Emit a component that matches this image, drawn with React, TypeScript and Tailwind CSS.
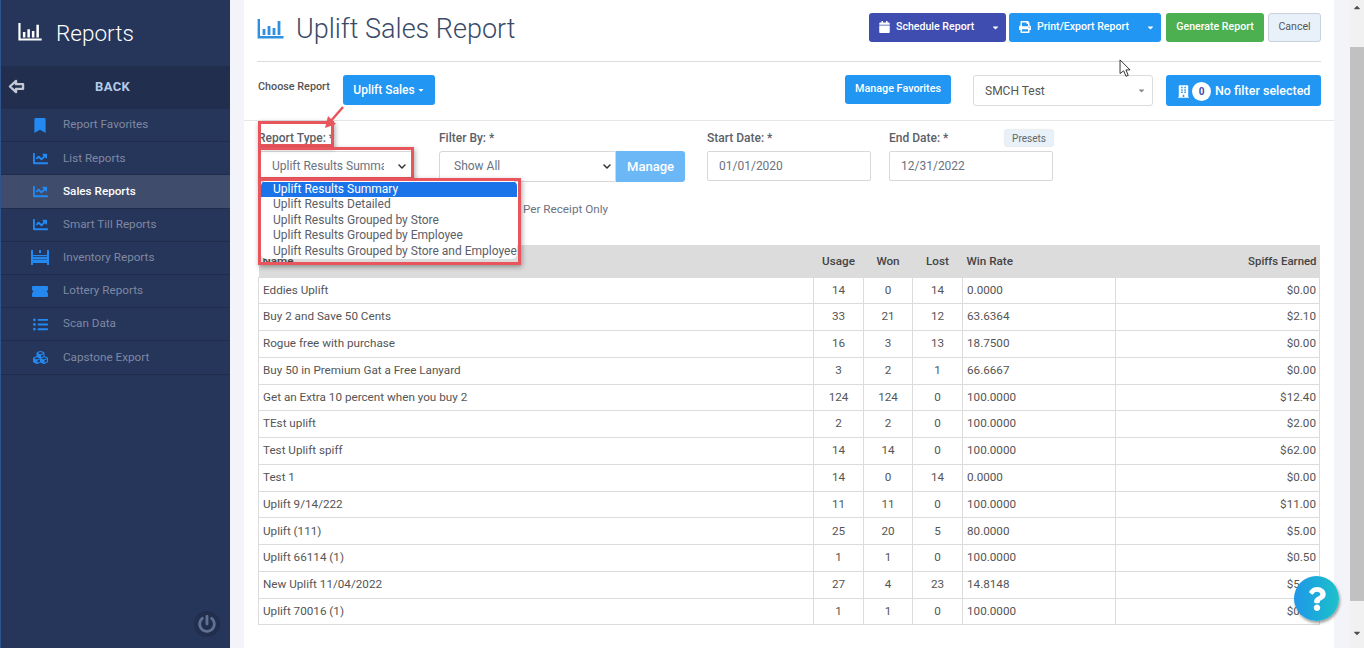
import { FaBookmark, FaChartLine, FaCalendar, FaPrint, FaBuilding, FaListUl, FaCubes, FaPowerOff, FaQuestion, FaCaretDown, FaChevronDown } from "react-icons/fa"

function BarsIcon({ className }: { className: string }) {
  return (
    <svg viewBox="0 0 26 20" fill="none" stroke="currentColor" className={className}>
      <path d="M1.3 0v18.300H26" strokeWidth="2.400" />
      <path d="M6.500 10v6M11.500 7v9M16.500 9v7M21.500 2v14" strokeWidth="2.800" />
    </svg>
  )
}

function InventoryIcon() {
  return (
    <svg viewBox="0 0 18 15" className="h-[15px] w-[18px]" fill="currentColor">
      <path d="M0 0h2v5h14V0h2v15h-2v-2H2v2H0z" />
      <path d="M8 0h2v3H8zM3.500 7h6v2h-6zM10.500 7h4v2h-4zM3.500 10h11v1.500h-11z" fill="currentColor" />
      <path d="M2 6h14v.8H2zM2 9.300h14v.5H2z" fill="#26355a" />
    </svg>
  )
}

function TicketIcon() {
  return (
    <svg viewBox="0 0 16 11" className="h-[11px] w-[16px]" fill="currentColor">
      <path d="M1 0h14a1 1 0 0 1 1 1v3.300a1.200 1.200 0 0 0 0 2.400V10a1 1 0 0 1-1 1H1a1 1 0 0 1-1-1V6.700a1.200 1.200 0 0 0 0-2.400V1a1 1 0 0 1 1-1z" />
    </svg>
  )
}

const navItems = [
  { name: "Report Favorites", icon: <FaBookmark className="h-[15px] w-[12px]" /> },
  { name: "List Reports", icon: <FaChartLine className="h-[15px] w-[15px]" /> },
  { name: "Sales Reports", icon: <FaChartLine className="h-[15px] w-[15px]" />, active: true },
  { name: "Smart Till Reports", icon: <FaChartLine className="h-[15px] w-[15px]" /> },
  { name: "Inventory Reports", icon: <InventoryIcon /> },
  { name: "Lottery Reports", icon: <TicketIcon /> },
  { name: "Scan Data", icon: <FaListUl className="h-[15px] w-[15px]" /> },
  { name: "Capstone Export", icon: <FaCubes className="h-[15px] w-[15px]" /> },
]

const rows = [
  ["Eddies Uplift", "14", "0", "14", "0.0000", "$0.00"],
  ["Buy 2 and Save 50 Cents", "33", "21", "12", "63.6364", "$2.10"],
  ["Rogue free with purchase", "16", "3", "13", "18.7500", "$0.00"],
  ["Buy 50 in Premium Gat a Free Lanyard", "3", "2", "1", "66.6667", "$0.00"],
  ["Get an Extra 10 percent when you buy 2", "124", "124", "0", "100.0000", "$12.40"],
  ["TEst uplift", "2", "2", "0", "100.0000", "$2.00"],
  ["Test Uplift spiff", "14", "14", "0", "100.0000", "$62.00"],
  ["Test 1", "14", "0", "14", "0.0000", "$0.00"],
  ["Uplift 9/14/222", "11", "11", "0", "100.0000", "$11.00"],
  ["Uplift (111)", "25", "20", "5", "80.0000", "$5.00"],
  ["Uplift 66114 (1)", "1", "1", "0", "100.0000", "$0.50"],
  ["New Uplift 11/04/2022", "27", "4", "23", "14.8148", "$5.40"],
  ["Uplift 70016 (1)", "1", "1", "0", "100.0000", "$0.10"],
]

const options = [
  "Uplift Results Summary",
  "Uplift Results Detailed",
  "Uplift Results Grouped by Store",
  "Uplift Results Grouped by Employee",
  "Uplift Results Grouped by Store and Employee",
]

function Sidebar() {
  return (
    <aside className="flex h-full w-[230px] shrink-0 flex-col border-l border-[#2f5590] bg-[#26355a]">
      <div className="flex h-[66px] items-center pl-[17px] text-white">
        <BarsIcon className="mt-[-2px] h-[18px] w-[24px]" />
        <span className="ml-[14px] mt-[2px] text-[22.500px] font-light">Reports</span>
      </div>
      <div className="flex h-[43px] items-center border-y border-[#212e4e] bg-[#212e4e] pb-[2px] pl-[7px]">
        <svg viewBox="0 0 18 16" className="h-[15px] w-[17px] text-[#c3c8d2]" fill="none" stroke="currentColor" strokeWidth="2.500">
          <path d="M8.500 2 2 8l6.500 6v-3.500H16v-5H8.500z" strokeLinejoin="round" />
        </svg>
        <span className="ml-[70px] text-[13px] font-bold tracking-[0.4px] text-[#b4cbe8]">BACK</span>
      </div>
      {navItems.map((item) => (
        <div
          key={item.name}
          className={`flex h-[33.2px] items-center border-b border-[#1f2c4c] ${item.active ? "bg-[#404c6b] font-medium text-white" : "text-[#7f89a1]"}`}
        >
          <span className="flex w-[62px] justify-center pl-[16px] text-[#2389f0]">{item.icon}</span>
          <span className="text-[11.7px]">{item.name}</span>
        </div>
      ))}
      <div className="mt-auto flex justify-end pb-[11px] pr-[10px]">
        <span className="flex h-[26px] w-[26px] items-center justify-center rounded-full bg-[#212e4e] text-[#5f7194]">
          <FaPowerOff className="h-[18px] w-[18px]" />
        </span>
      </div>
    </aside>
  )
}

function Header() {
  return (
    <div className="flex h-[62px] items-start justify-between border-b border-[#dcdcdc] pt-[13px]">
      <div className="flex items-center text-[#3a4a68]">
        <BarsIcon className="mt-[-2px] h-[20px] w-[27px] text-[#2f8fe0]" />
        <h1 className="ml-[12px] mt-[-2px] text-[27px] font-light leading-[36px]">Uplift Sales Report</h1>
      </div>
      <div className="flex text-[10.6px] font-medium text-white">
        <div className="flex h-[29px] w-[137px] items-center rounded-[3px] bg-[#3f4db0] pb-[1px] pl-[10px]">
          <FaCalendar className="h-[12px] w-[11px]" />
          <span className="ml-[6px]">Schedule Report</span>
          <FaCaretDown className="ml-auto mr-[6px] h-[9px] w-[9px]" />
        </div>
        <div className="ml-[3px] flex h-[29px] w-[152px] items-center rounded-[3px] bg-[#2196f3] pb-[1px] pl-[10px]">
          <FaPrint className="h-[12px] w-[12px]" />
          <span className="ml-[6px]">Print/Export Report</span>
          <FaCaretDown className="ml-auto mr-[6px] h-[9px] w-[9px]" />
        </div>
        <div className="ml-[5px] flex h-[29px] w-[98px] items-center justify-center rounded-[3px] bg-[#4caf50] pb-[1px]">Generate Report</div>
        <div className="ml-[4px] flex h-[29px] w-[53px] items-center justify-center rounded-[3px] border border-[#c9d2dc] bg-[#e8f1fa] pb-[1px] font-normal text-[#555]">Cancel</div>
      </div>
    </div>
  )
}

function ChooseRow() {
  return (
    <div className="flex h-[58px] items-start pt-[13px]">
      <span className="ml-[1px] mt-[6px] w-[85px] whitespace-nowrap text-[10.8px] font-medium leading-[12px] text-[#555]">Choose Report</span>
      <div className="flex h-[30px] w-[92px] items-center justify-center rounded-[3px] bg-[#2196f3] text-[12px] font-medium text-white">
        Uplift Sales
        <FaCaretDown className="ml-[2px] h-[8px] w-[8px]" />
      </div>
      <div className="ml-auto flex h-[29px] w-[106px] items-center justify-center rounded-[3px] bg-[#2196f3] text-[10.8px] font-medium text-white">Manage Favorites</div>
      <div className="ml-[22px] flex h-[31px] w-[180px] items-center rounded-[3px] border border-[#dcdcdc] pl-[11px] text-[12px] text-[#555]">
        SMCH Test
        <FaCaretDown className="ml-auto mr-[6px] h-[9px] w-[9px] text-[#888]" />
      </div>
      <div className="ml-[13px] flex h-[31px] w-[155px] items-center rounded-[3px] bg-[#2196f3] pl-[12px] pt-[1px] text-[12.500px] font-medium text-white">
        <FaBuilding className="h-[13px] w-[11px]" />
        <span className="ml-[3px] flex h-[19px] w-[19px] items-center justify-center rounded-full bg-white text-[10px] font-bold text-[#3f4db0]">0</span>
        <span className="ml-[4px]">No filter selected</span>
      </div>
    </div>
  )
}

function FormRow() {
  const label = "h-[16px] text-[12px] font-medium leading-[16px] text-[#5b6068]"
  const field = "flex h-[30px] items-center border border-[#d8d8d8] text-[12px] text-[#6b7280]"
  return (
    <div className="flex items-start pt-[9px]">
      <div className="w-[181px]">
        <div className={label}>Report Type: *</div>
        <div className={`${field} mt-[5px] w-[154px] pl-[13px]`}>
          <span className="w-[112px] overflow-hidden whitespace-nowrap">Uplift Results Summary</span>
          <FaChevronDown className="ml-[13px] h-[9px] w-[10px] text-[#333]" />
        </div>
      </div>
      <div className="w-[268px]">
        <div className={label}>Filter By: *</div>
        <div className="mt-[5px] flex">
          <div className={`${field} h-[31px] w-[177px] rounded-l-[3px] pb-[1px] pl-[14px]`}>
            Show All
            <FaChevronDown className="ml-auto mr-[3px] h-[9px] w-[10px] text-[#333]" />
          </div>
          <div className="flex h-[31px] w-[69px] items-center justify-center rounded-r-[3px] bg-[#6cb8f6] text-[13px] font-medium text-white">Manage</div>
        </div>
      </div>
      <div className="w-[182px]">
        <div className={label}>Start Date: *</div>
        <div className={`${field} mt-[5px] w-[164px] rounded-[2px] pl-[11px]`}>01/01/2020</div>
      </div>
      <div className="w-[164px]">
        <div className="flex items-start justify-between">
          <div className={label}>End Date: *</div>
          <div className="flex h-[16px] w-[48px] items-center justify-center rounded-[2px] bg-[#e8f1fa] text-[10px] text-[#666] shadow-[0_0_2px_#bbb]">Presets</div>
        </div>
        <div className={`${field} mt-[5px] w-[164px] rounded-[2px] pl-[11px]`}>12/31/2022</div>
      </div>
    </div>
  )
}

function ResultsTable() {
  return (
    <table className="w-full table-fixed border-collapse text-[11.7px] text-[#555]">
      <colgroup>
        <col className="w-[555px]" />
        <col className="w-[50px]" />
        <col className="w-[49px]" />
        <col className="w-[50px]" />
        <col className="w-[153px]" />
        <col />
      </colgroup>
      <thead>
        <tr className="h-[32px] bg-[#dcdcdc] text-[#444]">
          <th className="pl-[4px] pt-[2px] text-left font-medium">Name</th>
          <th className="pt-[2px] text-center font-medium">Usage</th>
          <th className="pt-[2px] text-center font-medium">Won</th>
          <th className="pt-[2px] text-center font-medium">Lost</th>
          <th className="pl-[4px] pt-[2px] text-left font-medium">Win Rate</th>
          <th className="pr-[3px] pt-[2px] text-right text-[11.4px] font-medium">Spiffs Earned</th>
        </tr>
      </thead>
      <tbody>
        {rows.map((r) => (
          <tr key={r[0]} className="h-[26.77px]">
            <td className="border border-[#dcdcdc] pl-[4px]">{r[0]}</td>
            <td className="border border-[#dcdcdc] text-center">{r[1]}</td>
            <td className="border border-[#dcdcdc] text-center">{r[2]}</td>
            <td className="border border-[#dcdcdc] text-center">{r[3]}</td>
            <td className="border border-[#dcdcdc] pl-[4px]">{r[4]}</td>
            <td className="border border-[#dcdcdc] pr-[3px] text-right">{r[5]}</td>
          </tr>
        ))}
      </tbody>
    </table>
  )
}

function Annotations() {
  const box = "absolute border-[3px] border-[#e9555c] shadow-[1px_2px_5px_rgba(0,0,0,0.35)]"
  return (
    <>
      <div className="absolute left-[523px] top-[202px] text-[11.7px] leading-[14px] text-[#6b7280]">Per Receipt Only</div>
      <div className={`${box} left-[258px] top-[121px] h-[26px] w-[76px]`} />
      <div className={`${box} left-[258px] top-[147px] h-[33px] w-[156px]`} />
      <div className="absolute left-[261px] top-[181px] z-10 h-[78px] w-[256px] overflow-hidden rounded-[5px] bg-white pt-[1px] text-[12px] leading-[15.400px] text-[#5b6068]">
        {options.map((o, i) => (
          <div key={o} className={`whitespace-nowrap pl-[12px] ${i === 0 ? "bg-[#1a73e8] text-white" : ""}`}>{o}</div>
        ))}
      </div>
      <div className={`${box} left-[258px] top-[178px] z-10 h-[87px] w-[263px]`} />
      <svg viewBox="0 0 24 26" className="absolute left-[322px] top-[105px] z-20 h-[26px] w-[24px]">
        <path d="M21 2 8 17" stroke="#e9555c" strokeWidth="2.500" />
        <path d="M3 23 6 11l8 8z" fill="#e9555c" />
      </svg>
      <svg viewBox="0 0 14 22" className="absolute left-[1119px] top-[59px] z-20 h-[20px] w-[13px]">
        <path d="M1 1v15l4-3 2.500 6 2.500-1-2.500-6H12z" fill="#fff" stroke="#222" strokeWidth="1" />
      </svg>
      <div className="absolute left-[1294px] top-[576px] z-20 flex h-[45px] w-[45px] items-center justify-center rounded-full bg-gradient-to-r from-[#2196e8] to-[#1fc1c9] text-white shadow-[1px_2px_3px_rgba(0,0,0,0.4)]">
        <FaQuestion className="h-[24px] w-[24px]" />
      </div>
    </>
  )
}

export default function App() {
  return (
    <div className="relative flex h-[648px] w-[1364px] overflow-hidden bg-[#f3f3fa] font-['Roboto',sans-serif]">
      <Sidebar />
      <main className="ml-[14px] h-full w-[1090px] bg-white">
        <div className="px-[13px]">
          <Header />
          <ChooseRow />
        </div>
        <div className="border-t border-[#e6e6e6] px-[14px]">
          <FormRow />
          <div className="mt-[63px]">
            <ResultsTable />
          </div>
        </div>
      </main>
      <div className="ml-auto flex h-full w-[14px] flex-col items-center bg-[#f1f1f1]">
        <FaCaretDown className="mt-[3px] h-[10px] w-[10px] rotate-180 text-[#505050]" />
        <div className="mt-[34px] h-[554px] w-full bg-[#c1c1c1]" />
        <FaCaretDown className="mt-[27px] h-[10px] w-[10px] text-[#505050]" />
      </div>
      <Annotations />
    </div>
  )
}
